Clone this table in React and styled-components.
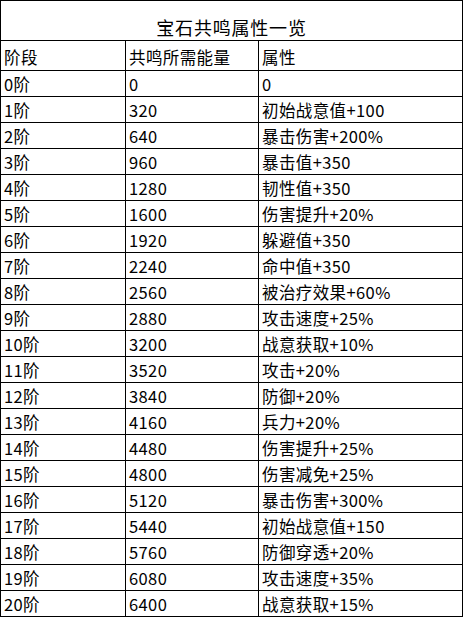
import React from 'react';
import styled, { createGlobalStyle } from 'styled-components';

const GlobalStyle = createGlobalStyle`
  html, body {
    margin: 0;
    padding: 0;
    background: #fff;
  }
  body {
    font-family: 'Noto Sans CJK SC', 'Noto Sans', sans-serif;
    color: #000;
  }
`;

const Sheet = styled.div`
  display: grid;
  grid-template-columns: 125px 133px 204px;
  grid-template-rows: 40px 30px;
  grid-auto-rows: 26px;
  width: 462px;
  border-top: 1px solid #000;
  border-left: 1px solid #000;
`;

const Title = styled.div`
  grid-column: 1 / span 3;
  display: flex;
  align-items: flex-end;
  justify-content: center;
  padding-bottom: 2px;
  font-size: 18px;
  line-height: 22px;
  letter-spacing: 0.8px;
  border-right: 1px solid #000;
  border-bottom: 1px solid #000;
`;

const Cell = styled.div`
  display: flex;
  align-items: ${(p) => (p.$head ? 'flex-end' : 'center')};
  padding: ${(p) => (p.$head ? '0 0 3px 3px' : '1px 0 0 3px')};
  font-size: 16.5px;
  line-height: 20px;
  letter-spacing: 0.4px;
  white-space: nowrap;
  border-right: 1px solid #000;
  border-bottom: 1px solid #000;
`;

const rows = [
  ['0阶', '0', '0'],
  ['1阶', '320', '初始战意值+100'],
  ['2阶', '640', '暴击伤害+200%'],
  ['3阶', '960', '暴击值+350'],
  ['4阶', '1280', '韧性值+350'],
  ['5阶', '1600', '伤害提升+20%'],
  ['6阶', '1920', '躲避值+350'],
  ['7阶', '2240', '命中值+350'],
  ['8阶', '2560', '被治疗效果+60%'],
  ['9阶', '2880', '攻击速度+25%'],
  ['10阶', '3200', '战意获取+10%'],
  ['11阶', '3520', '攻击+20%'],
  ['12阶', '3840', '防御+20%'],
  ['13阶', '4160', '兵力+20%'],
  ['14阶', '4480', '伤害提升+25%'],
  ['15阶', '4800', '伤害减免+25%'],
  ['16阶', '5120', '暴击伤害+300%'],
  ['17阶', '5440', '初始战意值+150'],
  ['18阶', '5760', '防御穿透+20%'],
  ['19阶', '6080', '攻击速度+35%'],
  ['20阶', '6400', '战意获取+15%'],
];

const App = () => {
  return (
    <>
      <GlobalStyle />
      <Sheet>
        <Title>宝石共鸣属性一览</Title>
        <Cell $head>阶段</Cell>
        <Cell $head>共鸣所需能量</Cell>
        <Cell $head>属性</Cell>
        {rows.map((r) =>
          r.map((v, i) => <Cell key={r[0] + i}>{v}</Cell>)
        )}
      </Sheet>
    </>
  );
};

export default App;
